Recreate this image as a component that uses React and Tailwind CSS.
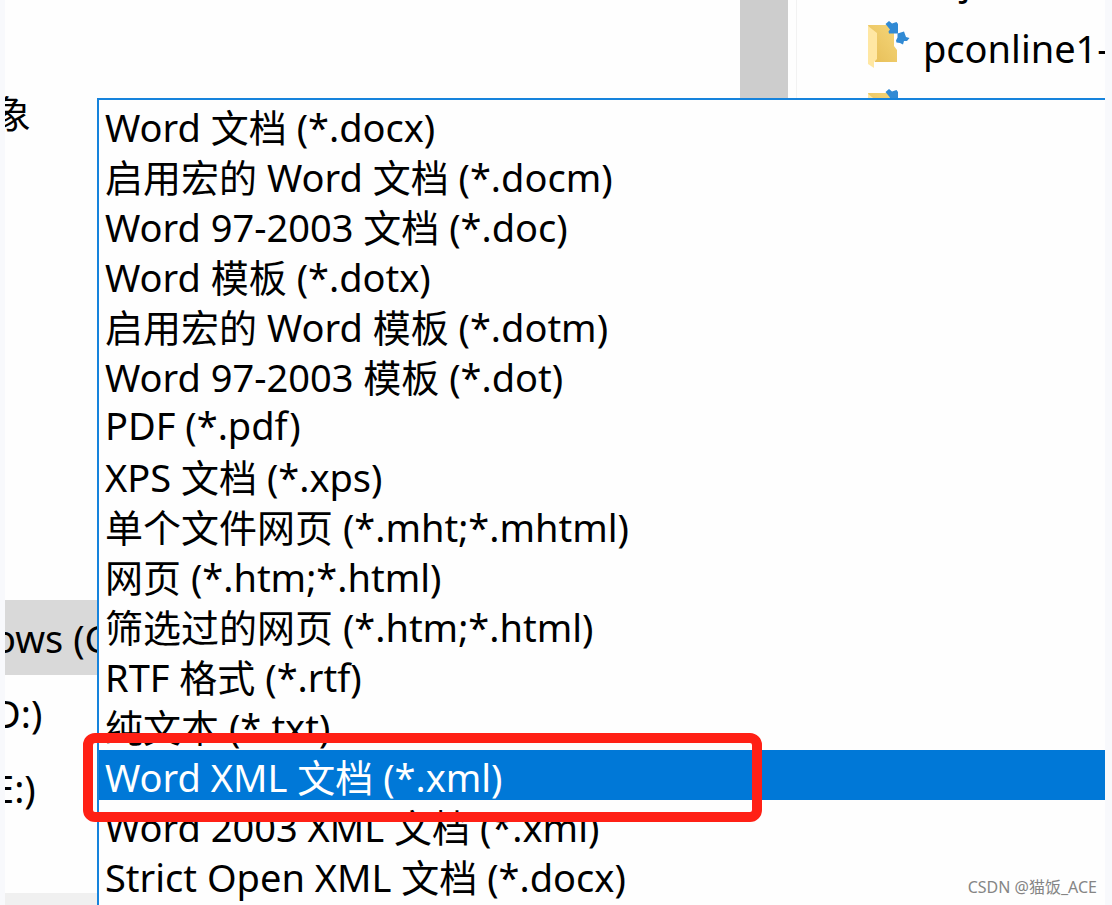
const fileTypes = [
  { value: "docx", label: "Word 文档 (*.docx)" },
  { value: "docm", label: "启用宏的 Word 文档 (*.docm)" },
  { value: "doc", label: "Word 97-2003 文档 (*.doc)" },
  { value: "dotx", label: "Word 模板 (*.dotx)" },
  { value: "dotm", label: "启用宏的 Word 模板 (*.dotm)" },
  { value: "dot", label: "Word 97-2003 模板 (*.dot)" },
  { value: "pdf", label: "PDF (*.pdf)" },
  { value: "xps", label: "XPS 文档 (*.xps)" },
  { value: "mhtml", label: "单个文件网页 (*.mht;*.mhtml)" },
  { value: "html", label: "网页 (*.htm;*.html)" },
  { value: "filtered-html", label: "筛选过的网页 (*.htm;*.html)" },
  { value: "rtf", label: "RTF 格式 (*.rtf)" },
  { value: "txt", label: "纯文本 (*.txt)" },
  { value: "xml", label: "Word XML 文档 (*.xml)" },
  { value: "xml-2003", label: "Word 2003 XML 文档 (*.xml)" },
  { value: "strict-docx", label: "Strict Open XML 文档 (*.docx)" },
];

const drives = [
  { label: "ows (C:)", active: true },
  { label: "D:)" },
  { label: "E:)" },
];

const FolderIcon = () => (
  <svg viewBox="0 0 44 50" className="h-[50px] w-11 shrink-0" aria-hidden="true">
    <defs>
      <linearGradient id="folderBack" x1="0" y1="1" x2="1" y2="0">
        <stop offset="0" stopColor="#e6bd55" />
        <stop offset="1" stopColor="#f5d67a" />
      </linearGradient>
    </defs>
    <path d="M1 4h26v21l3 4v12H8z" fill="url(#folderBack)" />
    <path d="M1 5l9 7v26l-3 3v6l-6-4z" fill="#ffe7a3" />
    <path d="M18.500 3l3.500-3 3 2.500 4.500-1.500 1.500 2v9.500l-9 0-.500-2 1.500-2z" fill="#318ad4" />
    <path d="M30.500 12.500l6.500-2 2 5.500 3.500 1-2.500 3-3 0-1 3.500-3-1.500-3.500-.500-.500-2 1.500-3z" fill="#318ad4" />
  </svg>
);

const NavItem = ({ children, active }) => (
  <a href="#" className={`flex h-[75px] items-center overflow-hidden ${active ? "bg-[#d9d9d9]" : ""}`}>
    <span className="-ml-3 whitespace-nowrap">{children}</span>
  </a>
);

const FileRow = ({ children }) => (
  <li className="flex h-17 shrink-0 items-center gap-3 whitespace-nowrap">
    <FolderIcon />
    <span className="pt-1">{children}</span>
  </li>
);

export default function App() {
  return (
    <div className="h-screen overflow-hidden bg-[#f8f9fc] pr-[7px] pl-[5px] font-['Noto_Sans','Noto_Sans_CJK_SC',sans-serif] text-[38px] leading-[50px] text-black">
      <main className="relative flex h-full overflow-hidden bg-[#fefefe]">
        <nav className="flex w-[735px] shrink-0 flex-col justify-between">
          <div className="pt-[75px]">
            <NavItem>象</NavItem>
            <div className="pt-[450px]">
              {drives.map((drive) => (
                <NavItem key={drive.label} active={drive.active}>
                  {drive.label}
                </NavItem>
              ))}
            </div>
          </div>
          <div className="h-3 bg-[#f0f0f0]" />
        </nav>
        <div className="w-12 shrink-0 bg-[#cdcdcd]" />
        <div className="ml-2 min-w-0 flex-1 overflow-hidden border-l border-[#f2f2f2] pl-[70px]">
          <ul className="-mt-14 flex flex-col">
            <li className="flex h-17 shrink-0 items-center pt-1 pl-[94px]">j</li>
            <FileRow>pconline1-</FileRow>
            <FileRow />
          </ul>
        </div>

        <select
          size={16}
          defaultValue="xml"
          aria-label="保存类型"
          className="absolute top-[98px] right-0 bottom-0 left-[92px] overflow-hidden rounded-none border-t-2 border-l-2 border-[#1683dc] bg-[#fefefe] outline-none"
        >
          {fileTypes.map((type) => (
            <option
              key={type.value}
              value={type.value}
              className="flex h-[50px] items-center px-1.5 py-0 checked:bg-[linear-gradient(#0078d7,#0078d7)] checked:text-white"
            >
              {type.label}
            </option>
          ))}
        </select>

        <div className="pointer-events-none absolute top-[733px] left-[78px] h-[89px] w-[679px] rounded-xl border-10 border-[#ff2015]" />
        <p className="pointer-events-none absolute right-2 bottom-1 text-base leading-7 text-[#858585]">
          CSDN @猫饭_ACE
        </p>
      </main>
    </div>
  );
}
